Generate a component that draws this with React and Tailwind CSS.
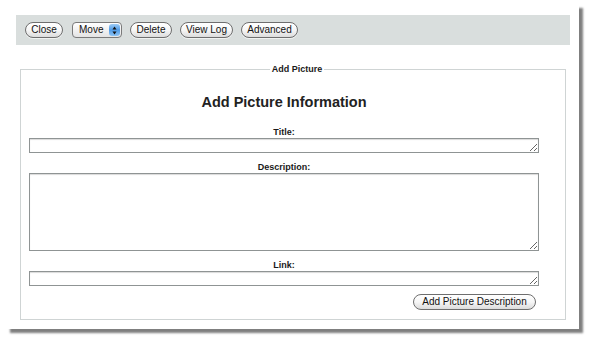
const font = { fontFamily: '"Liberation Sans", Arial, sans-serif' };

const Pill = ({ children, w }) => (
  <button
    className={`${w} h-[16px] rounded-full border border-[#6e6e6e] bg-gradient-to-b from-white via-[#f6f6f6] to-[#dcdcdc] text-[10px] leading-[14px] text-[#111] shadow-[0_1px_0_rgba(255,255,255,0.6)]`}
  >
    {children}
  </button>
);

const Field = ({ label, h, first }) => (
  <div className={first ? 'mt-[16px]' : 'mt-[9px]'}>
    <div className="text-center text-[9px] leading-[11px] font-bold text-[#1a1a1a]">{label}</div>
    <textarea
      className={`block w-[510px] ${h} border border-[#8f9494] bg-white resize shadow-[inset_0_1px_1px_rgba(0,0,0,0.15)] outline-none`}
    />
  </div>
);

export default function App() {
  return (
    <div className="w-[592px] h-[342px] bg-white pt-[4px] pl-[6px]" style={font}>
      <div className="w-[573px] h-[325px] bg-white shadow-[4px_4px_2px_rgba(0,0,0,0.5)] pt-[11px]">
        {/* toolbar */}
        <div className="ml-[10px] w-[554px] h-[30px] bg-[#d9dedd] flex items-center pl-[9px] gap-[8px]">
          <Pill w="w-[38px]">Close</Pill>
          <div className="ml-[1px] w-[50px] h-[16px] rounded-[4px] border border-[#7a7a7a] bg-gradient-to-b from-white to-[#e4e4e4] flex items-center justify-between pl-[6px] pr-[1px]">
            <span className="text-[10px] leading-[14px] text-[#111]">Move</span>
            <span className="w-[11px] h-[12px] rounded-[3px] bg-gradient-to-b from-[#9ccbf5] via-[#4f9be6] to-[#8cc4f5] flex items-center justify-center">
              <svg width="5" height="9" viewBox="0 0 5 9">
                <path d="M2.5 0.5 L4.5 3.5 L0.5 3.5 Z" fill="#111" />
                <path d="M2.5 8.5 L4.5 5.5 L0.5 5.5 Z" fill="#111" />
              </svg>
            </span>
          </div>
          <Pill w="w-[42px]">Delete</Pill>
          <Pill w="w-[53px]">View Log</Pill>
          <Pill w="w-[57px]">Advanced</Pill>
        </div>

        {/* form */}
        <fieldset className="mt-[19px] ml-[14px] w-[546px] h-[256px] border border-[#cfd4d4] pl-[8px]">
          <legend className="mx-auto px-[2px] text-[9px] leading-[11px] font-bold text-[#1a1a1a]">Add Picture</legend>
          <div className="w-[510px]">
            <h2 className="mt-[18px] text-center text-[14.5px] leading-[18px] font-bold text-[#222]">Add Picture Information</h2>
            <Field label="Title:" h="h-[15px]" first />
            <Field label="Description:" h="h-[78px]" />
            <Field label="Link:" h="h-[15px]" />
            <div className="mt-[8px] flex justify-end pr-[3px]">
              <Pill w="w-[123px] text-[10.5px]">Add Picture Description</Pill>
            </div>
          </div>
        </fieldset>
      </div>
    </div>
  );
}
